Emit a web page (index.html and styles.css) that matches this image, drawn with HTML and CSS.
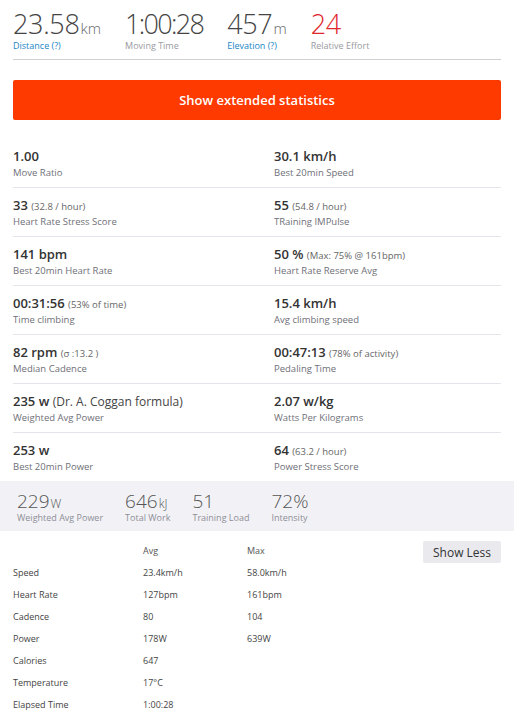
FILE: index.html
```html
<!DOCTYPE html>
<html lang="en">
<head>
<meta charset="utf-8">
<title>Activity statistics</title>
<link rel="stylesheet" href="styles.css">
</head>
<body>
<div class="page">
  <ul class="summary">
    <li class="sum-item">
      <div class="big">23.58<span class="unit">km</span></div>
      <div class="sum-label link">Distance (?)</div>
    </li>
    <li class="sum-item">
      <div class="big time">1:00:28</div>
      <div class="sum-label">Moving Time</div>
    </li>
    <li class="sum-item">
      <div class="big">457<span class="unit">m</span></div>
      <div class="sum-label link">Elevation (?)</div>
    </li>
    <li class="sum-item">
      <div class="big effort">24</div>
      <div class="sum-label">Relative Effort</div>
    </li>
  </ul>

  <button class="ext-btn">Show extended statistics</button>

  <div class="grid">
    <div class="cell"><div class="val">1.00</div><div class="lbl">Move Ratio</div></div>
    <div class="cell right"><div class="val">30.1 km/h</div><div class="lbl">Best 20min Speed</div></div>

    <div class="cell"><div class="val">33 <small>(32.8 / hour)</small></div><div class="lbl">Heart Rate Stress Score</div></div>
    <div class="cell right"><div class="val">55 <small>(54.8 / hour)</small></div><div class="lbl">TRaining IMPulse</div></div>

    <div class="cell"><div class="val">141 bpm</div><div class="lbl">Best 20min Heart Rate</div></div>
    <div class="cell right"><div class="val">50 % <small>(Max: 75% @ 161bpm)</small></div><div class="lbl">Heart Rate Reserve Avg</div></div>

    <div class="cell"><div class="val">00:31:56 <small>(53% of time)</small></div><div class="lbl">Time climbing</div></div>
    <div class="cell right"><div class="val">15.4 km/h</div><div class="lbl">Avg climbing speed</div></div>

    <div class="cell"><div class="val">82 rpm <small>(σ :13.2 )</small></div><div class="lbl">Median Cadence</div></div>
    <div class="cell right"><div class="val">00:47:13 <small>(78% of activity)</small></div><div class="lbl">Pedaling Time</div></div>

    <div class="cell"><div class="val">235 w <span class="note">(Dr. A. Coggan formula)</span></div><div class="lbl">Weighted Avg Power</div></div>
    <div class="cell right"><div class="val">2.07 w/kg</div><div class="lbl">Watts Per Kilograms</div></div>

    <div class="cell last"><div class="val">253 w</div><div class="lbl">Best 20min Power</div></div>
    <div class="cell right last"><div class="val">64 <small>(63.2 / hour)</small></div><div class="lbl">Power Stress Score</div></div>
  </div>
</div>

<ul class="band">
  <li class="band-item"><div class="mid">229<span class="munit">W</span></div><div class="band-label">Weighted Avg Power</div></li>
  <li class="band-item"><div class="mid">646<span class="munit">kJ</span></div><div class="band-label">Total Work</div></li>
  <li class="band-item"><div class="mid">51</div><div class="band-label">Training Load</div></li>
  <li class="band-item"><div class="mid">72%</div><div class="band-label">Intensity</div></li>
</ul>

<div class="more">
  <table class="avgmax">
    <thead>
      <tr><th></th><th>Avg</th><th>Max</th></tr>
    </thead>
    <tbody>
      <tr><td>Speed</td><td>23.4km/h</td><td>58.0km/h</td></tr>
      <tr><td>Heart Rate</td><td>127bpm</td><td>161bpm</td></tr>
      <tr><td>Cadence</td><td>80</td><td>104</td></tr>
      <tr><td>Power</td><td>178W</td><td>639W</td></tr>
      <tr><td>Calories</td><td>647</td><td></td></tr>
      <tr><td>Temperature</td><td>17°C</td><td></td></tr>
      <tr><td>Elapsed Time</td><td>1:00:28</td><td></td></tr>
    </tbody>
  </table>
  <button class="less-btn">Show Less</button>
</div>
</body>
</html>
```

FILE: styles.css
```css
* { box-sizing: border-box; }

html, body {
  margin: 0;
  padding: 0;
  background: #fff;
}

body {
  font-family: "Open Sans", "Noto Sans", sans-serif;
  color: #333;
}

.page {
  padding: 0 13px;
}

/* ---------- summary ---------- */
.summary {
  list-style: none;
  margin: 0;
  padding: 9px 0 7px;
  display: flex;
  gap: 24px;
  border-bottom: 1px solid #cfcfd4;
}

.big {
  font-size: 27px;
  line-height: 30px;
  font-weight: 300;
  color: #444;
  letter-spacing: -0.3px;
  white-space: nowrap;
}

.big.time {
  letter-spacing: -1.7px;
}

.big .unit {
  font-size: 15px;
  line-height: 1;
  color: #666;
  margin-left: 1px;
  letter-spacing: 0;
}

.big.effort {
  color: #e0262b;
}

.sum-label {
  margin-top: 1px;
  font-size: 9px;
  line-height: 12px;
  color: #9a9aa0;
  white-space: nowrap;
}

.sum-label.link {
  color: #1a86c4;
}

/* ---------- orange button ---------- */
.ext-btn {
  display: block;
  width: 100%;
  height: 40px;
  margin-top: 20px;
  border: 0;
  border-radius: 2px;
  background: #fe3a00;
  color: #fff;
  font-family: inherit;
  font-size: 13px;
  font-weight: 600;
  cursor: pointer;
}

/* ---------- stats grid ---------- */
.grid {
  display: grid;
  grid-template-columns: 247px 1fr;
  margin-top: 19px;
}

.cell {
  padding: 8px 0 7px;
  border-bottom: 1px solid #e4e4ea;
}

.cell.right {
  padding-left: 14px;
}

.cell.last {
  border-bottom: 0;
}

.val {
  font-size: 13px;
  line-height: 18px;
  font-weight: 600;
  color: #333;
  white-space: nowrap;
}

.val small {
  font-size: 9.5px;
  line-height: 1;
  font-weight: 400;
  color: #666;
}

.val .note {
  font-size: 12px;
  line-height: 1;
  font-weight: 400;
  color: #444;
}

.lbl {
  margin-top: 1px;
  font-size: 9.5px;
  line-height: 14px;
  color: #6f6f78;
}

/* ---------- grey band ---------- */
.band {
  list-style: none;
  margin: 0;
  padding: 9px 17px 7px;
  display: flex;
  gap: 22px;
  background: #f2f2f6;
}

.mid {
  font-size: 19px;
  line-height: 22px;
  font-weight: 300;
  color: #555;
  white-space: nowrap;
}

.munit {
  font-size: 12px;
  line-height: 1;
  margin-left: 1px;
}

.band-label {
  font-size: 9px;
  line-height: 12px;
  color: #8e8e96;
  white-space: nowrap;
}

/* ---------- avg / max table ---------- */
.more {
  display: flex;
  justify-content: space-between;
  align-items: flex-start;
  padding: 8px 13px 0;
}

.avgmax {
  border-collapse: collapse;
  font-size: 9px;
  color: #444;
}

.avgmax th,
.avgmax td {
  height: 22px;
  padding: 0;
  text-align: left;
  font-weight: 400;
  vertical-align: middle;
  white-space: nowrap;
}

.avgmax th:nth-child(1),
.avgmax td:nth-child(1) { width: 130px; }

.avgmax th:nth-child(2),
.avgmax td:nth-child(2) { width: 104px; }

.avgmax th {
  color: #555;
}

.less-btn {
  height: 22px;
  margin-top: 2px;
  padding: 0 10px;
  border: 0;
  border-radius: 2px;
  background: #e9e9ee;
  color: #333;
  font-family: inherit;
  font-size: 12px;
  cursor: pointer;
}
```
